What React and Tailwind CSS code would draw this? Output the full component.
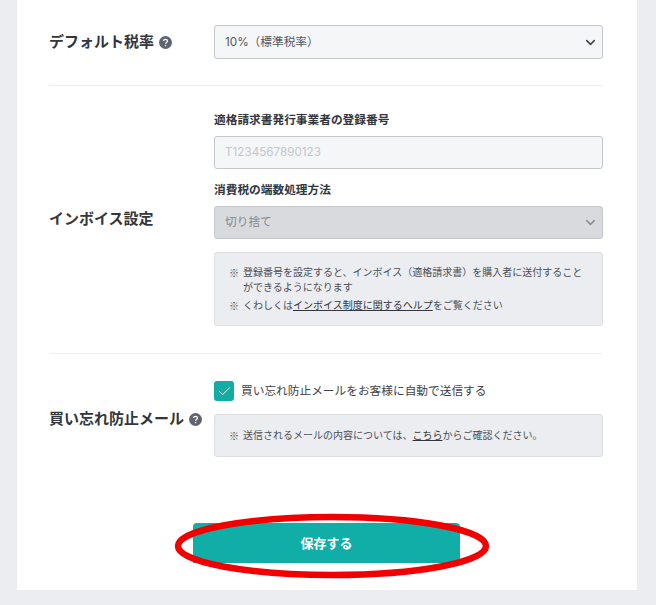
import { ChevronDown, Check } from 'lucide-react';

const CJK = "font-['Noto_Sans_CJK_JP',sans-serif]";

const HelpIcon = () => (
    <svg viewBox="0 0 16 16" className="w-[13px] h-[13px] shrink-0">
        <circle cx="8" cy="8" r="8" fill="#5f6470" />
        <path d="M5.6 6.2C5.7 4.9 6.7 4.2 8 4.2c1.4 0 2.4.8 2.4 2 0 1-.6 1.4-1.3 1.9-.6.4-.9.7-.9 1.4" fill="none" stroke="#fff" strokeWidth="1.6" />
        <circle cx="8.1" cy="11.8" r="1" fill="#fff" />
    </svg>
);

const RowLabel = ({ children, help }) => (
    <div className="w-[165px] shrink-0 flex items-center gap-[5px] text-[15px] leading-[20px] font-bold text-[#33363d]">
        <span className="whitespace-nowrap">{children}</span>
        {help && <HelpIcon />}
    </div>
);

const FieldLabel = ({ children }) => (
    <div className="text-[11.7px] leading-[16px] font-bold text-[#33363d]">{children}</div>
);

const App = () => {
    return (
        <div className="relative h-[605px] overflow-hidden bg-[#ebedf0] pl-[17px] pr-[19px] pb-[15px] font-['Inter','Noto_Sans_CJK_JP',sans-serif]">
            <div className="h-full bg-white pl-8 pr-[34px]">
                {/* デフォルト税率 */}
                <div className="flex items-center pt-[25px] pb-[26px] border-b border-[#eeeff1]">
                    <RowLabel help>デフォルト税率</RowLabel>
                    <div className="flex-1 h-[34px] pl-[10px] pr-[4px] flex items-center justify-between rounded-[3px] border border-[#c4c7cc] bg-[#f5f6f8] text-[11.7px] text-[#53565e]">
                        <span className="pt-px">10%（標準税率）</span>
                        <ChevronDown className="w-[15px] h-[15px] text-[#3e4149]" strokeWidth={2.4} />
                    </div>
                </div>

                {/* インボイス設定 */}
                <div className="flex items-center pt-[26px] pb-[27px] border-b border-[#eeeff1]">
                    <RowLabel>インボイス設定</RowLabel>
                    <div className="flex-1">
                        <FieldLabel>適格請求書発行事業者の登録番号</FieldLabel>
                        <div className="mt-[8px] h-[33px] px-[10px] pt-px flex items-center rounded-[3px] border border-[#c4c7cc] bg-[#f5f6f8] text-[11.7px] text-[#c3c6cc]">
                            T1234567890123
                        </div>
                        <div className="mt-[13px]">
                            <FieldLabel>消費税の端数処理方法</FieldLabel>
                        </div>
                        <div className="mt-[8px] h-[33px] pl-[10px] pr-[4px] flex items-center justify-between rounded-[3px] border border-[#c4c7cc] bg-[#d9dade] text-[11.7px] text-[#85888f]">
                            <span>切り捨て</span>
                            <ChevronDown className="w-[15px] h-[15px] text-[#8b8e95]" strokeWidth={2.4} />
                        </div>
                        <div className="mt-[13px] h-[74px] px-[14px] flex flex-col justify-center rounded-[3px] border border-[#dcdee2] bg-[#ebedf0] text-[10px] leading-[15px] text-[#4c4f57]">
                            <div className="flex gap-[4px]">
                                <span className={`shrink-0 ${CJK}`}>※</span>
                                <span>登録番号を設定すると、インボイス（適格請求書）を購入者に送付することができるようになります</span>
                            </div>
                            <div className="flex gap-[4px] mt-[3px]">
                                <span className={`shrink-0 ${CJK}`}>※</span>
                                <span>くわしくは<span className="underline text-[#33363d]">インボイス制度に関するヘルプ</span>をご覧ください</span>
                            </div>
                        </div>
                    </div>
                </div>

                {/* 買い忘れ防止メール */}
                <div className="flex items-center pt-[27px]">
                    <RowLabel help>買い忘れ防止メール</RowLabel>
                    <div className="flex-1">
                        <div className="flex items-center gap-[7px] text-[11.7px] leading-[20px] text-[#3e4149]">
                            <span className="w-[20px] h-[20px] rounded-[3px] bg-[#12aca4] flex items-center justify-center">
                                <Check className="w-[15px] h-[15px] text-white" strokeWidth={1.5} />
                            </span>
                            <span>買い忘れ防止メールをお客様に自動で送信する</span>
                        </div>
                        <div className="mt-[13px] h-[43px] px-[14px] flex items-center gap-[4px] rounded-[3px] border border-[#dcdee2] bg-[#ebedf0] text-[10px] text-[#4c4f57]">
                            <span className={CJK}>※</span>
                            <span>送信されるメールの内容については、<span className="underline text-[#33363d]">こちら</span>からご確認ください。</span>
                        </div>
                    </div>
                </div>

                {/* 保存ボタン */}
                <div className="mt-[66px] pl-[144px]">
                    <button className="w-[267px] h-[40px] pt-px rounded-t-[4px] bg-[#10aea6] text-[13px] font-bold text-white">
                        保存する
                    </button>
                </div>
            </div>

            {/* 赤い手書き風の楕円 */}
            <svg className="absolute left-[170px] top-[510px] w-[325px] h-[75px] pointer-events-none" viewBox="0 0 325 75">
                <ellipse cx="162" cy="36" rx="154" ry="29" fill="none" stroke="#f20000" strokeWidth="6.5" />
            </svg>
        </div>
    );
};

export default App;
